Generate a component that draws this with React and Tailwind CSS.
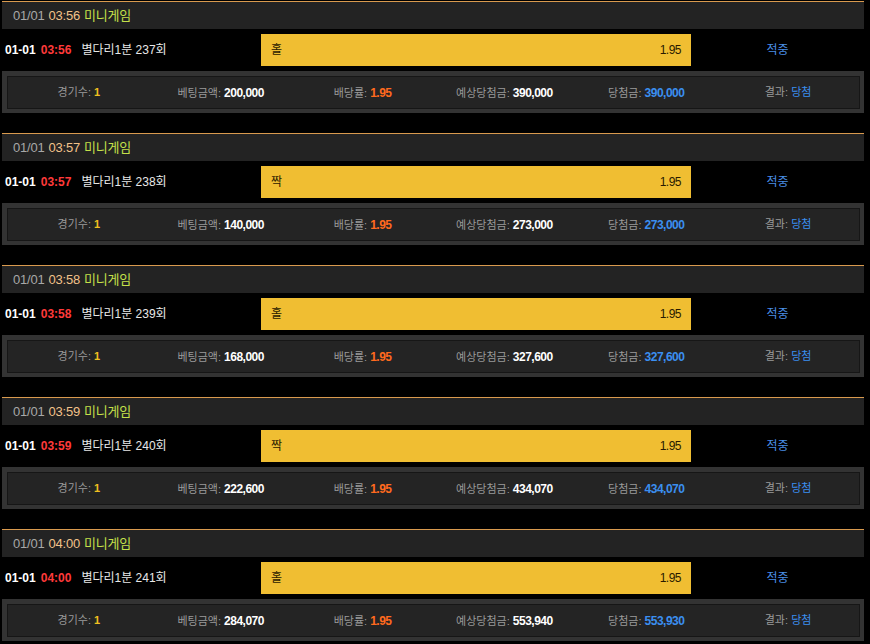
import React from 'react'

const games = [
  { time: '03:56', round: '237회', pick: '홀', bet: '200,000', expect: '390,000', win: '390,000' },
  { time: '03:57', round: '238회', pick: '짝', bet: '140,000', expect: '273,000', win: '273,000' },
  { time: '03:58', round: '239회', pick: '홀', bet: '168,000', expect: '327,600', win: '327,600' },
  { time: '03:59', round: '240회', pick: '짝', bet: '222,600', expect: '434,070', win: '434,070' },
  { time: '04:00', round: '241회', pick: '홀', bet: '284,070', expect: '553,940', win: '553,930' },
]

function Stat({ label, children }) {
  return (
    <div className="text-center">
      <span className="text-[#9a9a9a]">{label}: </span>
      {children}
    </div>
  )
}

function BetBlock({ g }) {
  return (
    <div className="mb-[20px]">
      {/* header */}
      <div className="h-[28px] border-t border-[#d99a4e] bg-[#232323] flex items-center pl-[11px] text-[13px] tracking-[-0.2px]">
        <span className="text-[#a8a8a8]">01/01</span>
        <span className="text-[#f2c28a] ml-[4px]">{g.time}</span>
        <span className="text-[#c5e04a] ml-[4px]">미니게임</span>
      </div>

      {/* game row */}
      <div className="h-[42px] flex items-center">
        <div className="w-[259px] pl-[3px] text-[12px] flex items-center">
          <span className="text-white font-bold">01-01</span>
          <span className="text-[#ff3a3a] font-bold ml-[5px]">{g.time}</span>
          <span className="text-[#e8e8e8] ml-[10px]">별다리1분 {g.round}</span>
        </div>
        <div className="w-[430px] h-[32px] bg-[#f0be32] flex items-center justify-between px-[10px] text-[12px] text-[#2a1a00]">
          <span>{g.pick}</span>
          <span className="tracking-[-0.5px]">1.95</span>
        </div>
        <div className="flex-1 text-center text-[12px] text-[#4a8ee6]">적중</div>
      </div>

      {/* detail */}
      <div className="bg-[#333333] pt-[5px] pl-[5px] pr-[4px] pb-[4px]">
        <div className="h-[33px] border border-[#161616] bg-[#242424] grid grid-cols-6 items-center text-[11px]">
          <Stat label="경기수">
            <span className="text-[#f0c020] font-bold">1</span>
          </Stat>
          <Stat label="베팅금액">
            <span className="text-white font-bold text-[12px] tracking-[-0.5px]">{g.bet}</span>
          </Stat>
          <Stat label="배당률">
            <span className="text-[#ff6a1e] font-bold text-[12px] tracking-[-0.5px]">1.95</span>
          </Stat>
          <Stat label="예상당첨금">
            <span className="text-white font-bold text-[12px] tracking-[-0.5px]">{g.expect}</span>
          </Stat>
          <Stat label="당첨금">
            <span className="text-[#3b8ff0] font-bold text-[12px] tracking-[-0.5px]">{g.win}</span>
          </Stat>
          <Stat label="결과">
            <span className="text-[#3b8ff0]">당첨</span>
          </Stat>
        </div>
      </div>
    </div>
  )
}

export default function App() {
  return (
    <div
      className="w-[870px] h-[644px] overflow-hidden bg-black pl-[2px] pt-[1px]"
      style={{ fontFamily: '"Liberation Sans", "Noto Sans CJK KR", sans-serif' }}
    >
      <div className="w-[862px]">
        {games.map((g) => (
          <BetBlock key={g.time} g={g} />
        ))}
      </div>
    </div>
  )
}
